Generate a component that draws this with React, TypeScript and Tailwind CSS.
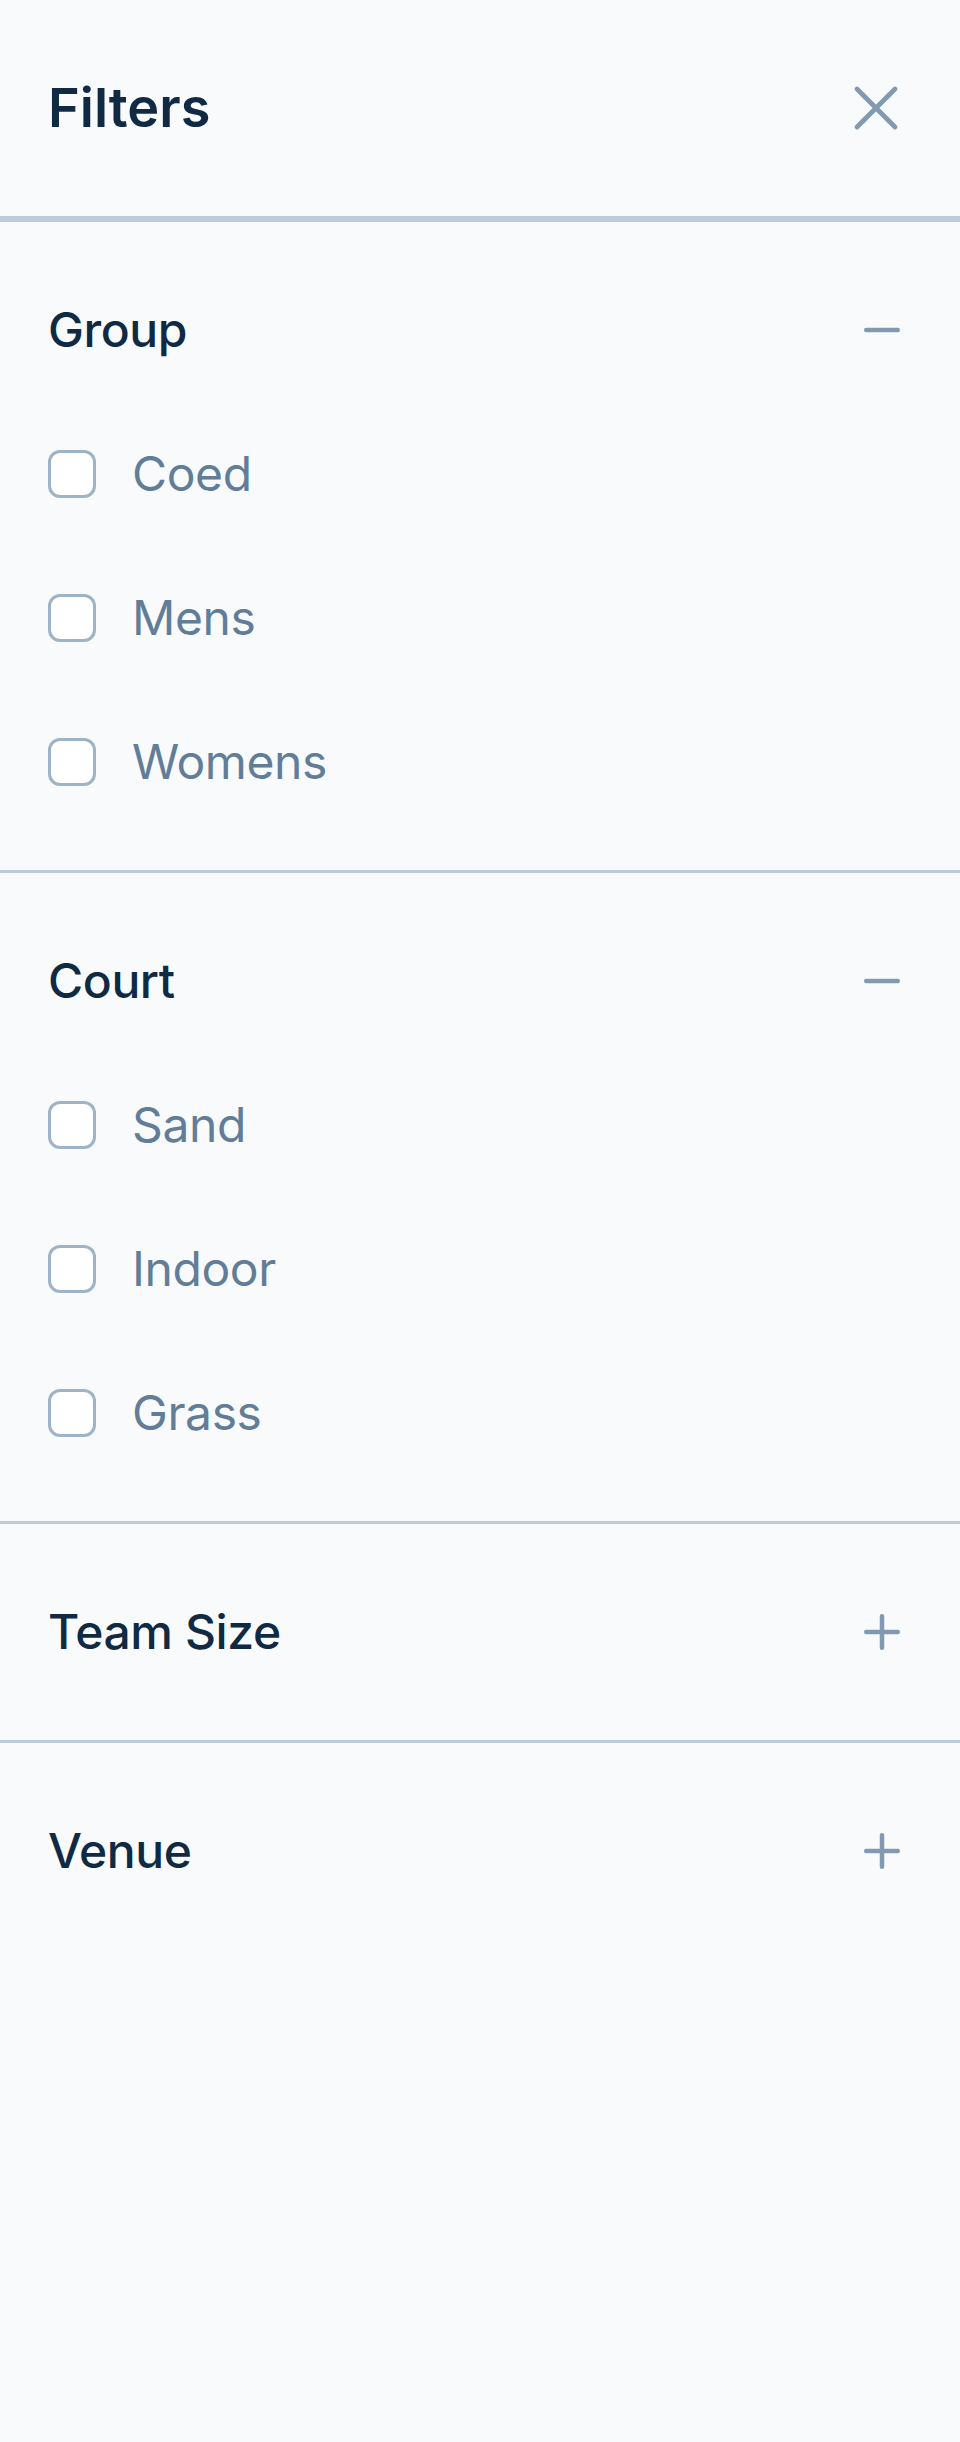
import { useState } from "react";

type Section = {
  id: string;
  name: string;
  options: string[];
};

const SECTIONS: Section[] = [
  { id: "group", name: "Group", options: ["Coed", "Mens", "Womens"] },
  { id: "court", name: "Court", options: ["Sand", "Indoor", "Grass"] },
  { id: "size", name: "Team Size", options: ["2s", "4s", "6s"] },
  { id: "venue", name: "Venue", options: ["North Beach", "Downtown"] },
];

export default function App() {
  const [open, setOpen] = useState<Record<string, boolean>>({
    group: true,
    court: true,
  });
  const [checked, setChecked] = useState<Record<string, boolean>>({});

  function toggle(id: string) {
    setOpen((o) => ({ ...o, [id]: !o[id] }));
  }

  return (
    <div className="min-h-[2442px] w-full bg-[#f8fafc] font-['Inter','Noto_Sans',sans-serif]">
      {/* Header */}
      <header className="flex h-[222px] items-center justify-between border-b-[6px] border-[#bccbdb] px-12">
        <h2 className="text-[54px] font-semibold leading-[72px] text-[#102a43]">Filters</h2>
        <button
          className="-mr-6 flex h-[120px] w-[120px] items-center justify-center text-[#829ab1]"
          aria-label="Close menu"
        >
          <svg viewBox="0 0 24 24" fill="none" stroke="currentColor" strokeWidth={1.5} className="h-[76px] w-[76px]">
            <path strokeLinecap="round" strokeLinejoin="round" d="M6 18L18 6M6 6l12 12" />
          </svg>
        </button>
      </header>

      {/* Sections */}
      <div>
        {SECTIONS.map((s, i) => (
          <div
            key={s.id}
            className={
              "px-12 py-[72px] " + (i < SECTIONS.length - 1 ? "border-b-[3px] border-[#bccbdb]" : "")
            }
          >
            <button
              onClick={() => toggle(s.id)}
              className="flex h-[72px] w-full items-center justify-between text-left"
            >
              <span className="text-[48px] font-medium leading-[72px] tracking-[-0.4px] text-[#102a43]">
                {s.name}
              </span>
              <span className="flex h-[60px] w-[60px] items-center justify-center text-[#829ab1]">
                {open[s.id] ? (
                  <svg viewBox="0 0 20 20" fill="currentColor" className="h-[60px] w-[60px]">
                    <path d="M4 10a.75.75 0 01.75-.75h10.5a.75.75 0 010 1.5H4.75A.75.75 0 014 10z" />
                  </svg>
                ) : (
                  <svg viewBox="0 0 20 20" fill="currentColor" className="h-[60px] w-[60px]">
                    <path d="M10.75 4.75a.75.75 0 00-1.5 0v4.5h-4.5a.75.75 0 000 1.5h4.5v4.5a.75.75 0 001.5 0v-4.5h4.5a.75.75 0 000-1.5h-4.5v-4.5z" />
                  </svg>
                )}
              </span>
            </button>
            {open[s.id] && (
              <div className="flex flex-col gap-[72px] pt-[72px]">
                {s.options.map((o) => {
                  const key = s.id + ":" + o;
                  return (
                    <label key={key} className="flex h-[72px] items-center">
                      <input
                        type="checkbox"
                        checked={!!checked[key]}
                        onChange={() => setChecked((c) => ({ ...c, [key]: !c[key] }))}
                        className="h-[48px] w-[48px] shrink-0 appearance-none rounded-[12px] border-[3px] border-[#9fb3c8] bg-white checked:bg-[#334e68]"
                      />
                      <span className="ml-[36px] text-[48px] leading-[72px] tracking-[-0.4px] text-[#627d98]">{o}</span>
                    </label>
                  );
                })}
              </div>
            )}
          </div>
        ))}
      </div>
    </div>
  );
}
